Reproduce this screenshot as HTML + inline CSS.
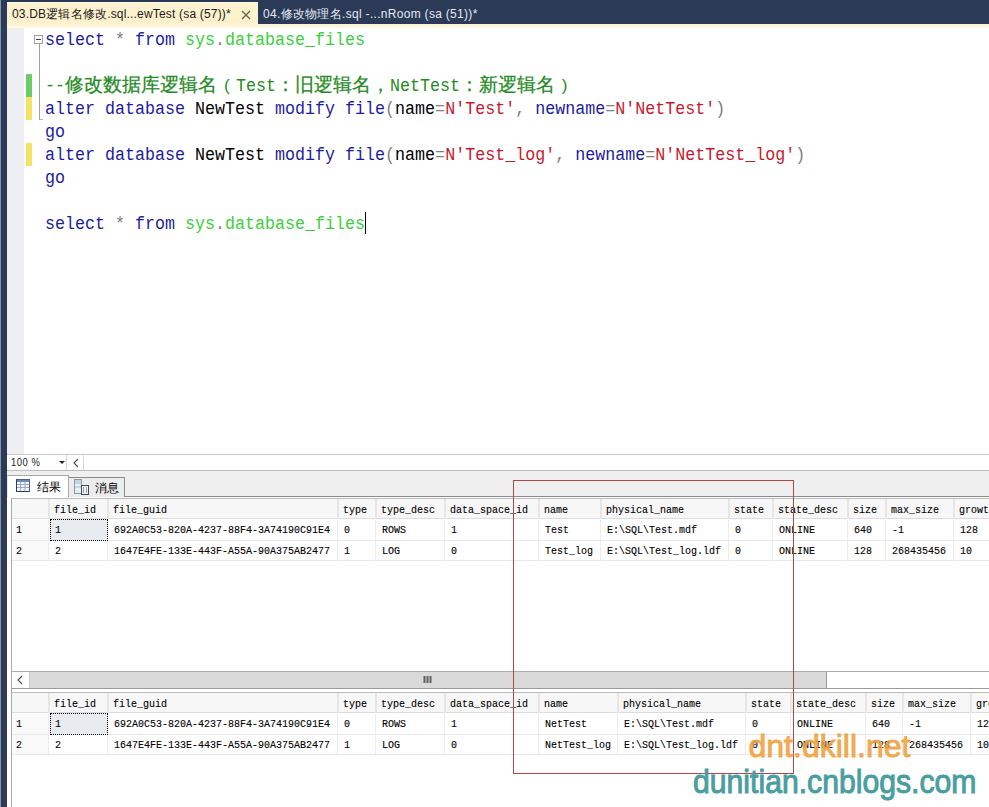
<!DOCTYPE html>
<html><head><meta charset="utf-8">
<style>
*{margin:0;padding:0;box-sizing:border-box}
html,body{width:989px;height:807px;overflow:hidden;background:#fff}
body{position:relative;font-family:"Liberation Sans",sans-serif}
.a{position:absolute}
#lstrip{left:0;top:0;width:7px;height:807px;background:#2a3a57}
#lstrip0{left:0;top:0;width:1px;height:807px;background:#8393a8}
#topbar{left:0;top:0;width:989px;height:24px;background:#2a3a57}
#tab1{left:7px;top:2px;width:251px;height:22px;background:linear-gradient(#fffbea 0,#fdf3d0 2px,#fcf1cc 20px,#fdf3d3 100%)}
#ystrip{left:7px;top:24px;width:982px;height:4px;background:linear-gradient(#fcf2d0,#fdf6de 60%,#fefbf0)}
.tabt{font-size:12px;letter-spacing:0.18px;white-space:nowrap;top:6px;line-height:16px}
#t1{left:12px;color:#1b1b1b}
#t2{left:263px;color:#e4e8f2;letter-spacing:0.3px}
#close{left:241px;top:10px;width:10px;height:10px}
#margin{left:7px;top:28px;width:17px;height:426px;background:#efeff3}
.ln{left:45.4px;font-family:"Liberation Mono",monospace;font-size:18px;line-height:23px;white-space:pre;color:#000;transform:scaleX(0.9259);transform-origin:0 0}
.lnc{left:45.4px;font-family:"Liberation Mono",monospace;font-size:18px;line-height:23px;white-space:pre}
.lnc b{font-weight:normal;font-size:18.76px;line-height:0;-webkit-text-stroke:0.25px #248c24}
.lnc u{text-decoration:none;display:inline-block;width:18.76px;text-align:center;font-family:"Liberation Sans",sans-serif;font-size:17px;line-height:0}
.lnc i{font-style:normal;display:inline-block;transform:scaleX(0.9259);transform-origin:0 0;line-height:0}
.k{color:#1c1c9c}
.g{color:#808080}
.s{color:#c41a2e}
.sy{color:#3ccf3c}
.c{color:#248c24}
#fold{left:34px;top:35px;width:9px;height:9px;border:1px solid #a0a0a0;background:#fff}
#fold i{position:absolute;left:1px;top:3px;width:5px;height:1px;background:#404040}
#foldline{left:39px;top:44px;width:1px;height:76px;background:#a0a0a0}
#foldtick{left:40px;top:119px;width:3px;height:1px;background:#b8b8b8}
#gbar{left:26px;top:74px;width:6px;height:23px;background:#6ccc6c}
#ybar1{left:26px;top:97px;width:6px;height:23px;background:#f4e466}
#ybar2{left:26px;top:143px;width:6px;height:23px;background:#f4e466}
#cursor{left:365px;top:212px;width:1px;height:22px;background:#000}
#zoombar{left:7px;top:454px;width:982px;height:17px;background:#fff;border-top:1px solid #c8c8c8;border-bottom:1px solid #bdbdbd}
#zoomtxt{left:11px;top:455px;font-size:11px;letter-spacing:0.6px;transform:scaleX(0.86);transform-origin:0 0;line-height:15px;color:#1b1b1b}
#zarrow{left:58.5px;top:461px;width:0;height:0;border-left:3px solid transparent;border-right:3px solid transparent;border-top:3px solid #222}
#zsep{left:66px;top:455px;width:18px;height:15px;border-left:1px solid #d8d8d8;border-right:1px solid #d8d8d8}
#zlt{left:73px;top:455px;font-size:12px;line-height:15px;color:#555}
#gband{left:7px;top:471px;width:982px;height:26px;background:#efefef}
#tabline{left:7px;top:496px;width:982px;height:1px;background:#8a8a8a}
#rtab{left:7px;top:475px;width:62px;height:22px;background:#fff;border:1px solid #a8a8a8;border-left-color:#e8e8e8;border-bottom:none}
#mtab{left:68px;top:477px;width:57px;height:20px;background:#ececec;border:1px solid #8a8a8a;border-bottom:none}
.tt{font-size:12px;line-height:14px;color:#000;top:480px}
.gt{position:absolute;font-family:"Liberation Mono",monospace;font-size:11.5px;line-height:14px;color:#000;-webkit-text-stroke:0.12px #000;white-space:pre;transform:scaleX(0.8696);transform-origin:0 0}
.hdr{position:absolute;background:#f7f7f7}
.sepv{position:absolute;width:2px;background:#e6e6e6}
.seph{position:absolute;height:1px;background:#dcdcdc}
.focus{position:absolute;background:#e8ecf1;border:1px dotted #000}
#wm1{left:748.5px;top:730px;font-size:32px;color:rgba(240,160,60,.85);line-height:32px;white-space:nowrap;-webkit-text-stroke:1px rgba(240,160,60,.85)}
#wm2{left:692.5px;top:765.5px;font-size:33px;color:#4a9ea0;line-height:32px;white-space:nowrap;-webkit-text-stroke:1px #4a9ea0;transform:scaleX(0.9144);transform-origin:0 0}
#redbox{left:513px;top:480px;width:281px;height:294px;border:1px solid #b04848}
</style></head><body>
<div id="topbar" class="a"></div>
<div id="lstrip" class="a"></div>
<div id="lstrip0" class="a"></div>
<div id="tab1" class="a"></div>
<div id="ystrip" class="a"></div>
<div id="t1" class="a tabt">03.DB逻辑名修改.sql...ewTest (sa (57))*</div>
<svg id="close" class="a" viewBox="0 0 10 10"><path d="M1 1L9 9M9 1L1 9" stroke="#6b6446" stroke-width="1.4"/></svg>
<div id="t2" class="a tabt">04.修改物理名.sql -...nRoom (sa (51))*</div>
<div id="margin" class="a"></div>
<div id="gbar" class="a"></div>
<div id="ybar1" class="a"></div>
<div id="ybar2" class="a"></div>
<div id="fold" class="a"><i></i></div>
<div id="foldline" class="a"></div>
<div id="foldtick" class="a"></div>
<div class="a ln" style="top:29px"><span class="k">select</span> <span class="g">*</span> <span class="k">from</span> <span class="sy">sys</span><span class="g">.</span><span class="sy">database_files</span></div>
<div class="a lnc" style="top:75px"><span class="c"><i style="width:20px">--</i><b>修改数据库逻辑名</b><u>(</u><i style="width:40px">Test</i><b>：旧逻辑名，</b><i style="width:70px">NetTest</i><b>：新逻辑名</b><u>)</u></span></div>
<div class="a ln" style="top:98px"><span class="k">alter</span> <span class="k">database</span> NewTest <span class="k">modify</span> <span class="k">file</span><span class="g">(</span>name<span class="g">=</span><span class="s">N'Test'</span><span class="g">,</span> <span class="k">newname</span><span class="g">=</span><span class="s">N'NetTest'</span><span class="g">)</span></div>
<div class="a ln" style="top:121px"><span class="k">go</span></div>
<div class="a ln" style="top:144px"><span class="k">alter</span> <span class="k">database</span> NewTest <span class="k">modify</span> <span class="k">file</span><span class="g">(</span>name<span class="g">=</span><span class="s">N'Test_log'</span><span class="g">,</span> <span class="k">newname</span><span class="g">=</span><span class="s">N'NetTest_log'</span><span class="g">)</span></div>
<div class="a ln" style="top:167px"><span class="k">go</span></div>
<div class="a ln" style="top:213px"><span class="k">select</span> <span class="g">*</span> <span class="k">from</span> <span class="sy">sys</span><span class="g">.</span><span class="sy">database_files</span></div>

<div id="cursor" class="a"></div>
<div id="zoombar" class="a"></div>
<div id="zoomtxt" class="a">100 %</div>
<div id="zarrow" class="a"></div>
<div id="zsep" class="a"></div>
<svg class="a" style="left:72px;top:458px" width="8" height="10"><path d="M6 1L2 5L6 9" fill="none" stroke="#555" stroke-width="1.2"/></svg>
<div id="gband" class="a"></div>
<div id="tabline" class="a"></div>
<div id="mtab" class="a"></div>
<div id="rtab" class="a"></div>
<svg class="a" style="left:16px;top:479px" width="14" height="13" viewBox="0 0 14 13">
<rect x="0.5" y="0.5" width="13" height="12" fill="#f4f8fc" stroke="#4a5f88"/>
<rect x="1" y="1" width="12" height="2" fill="#6a8cc0"/>
<path d="M1 5.5H13M1 8.5H13M4.5 3V12M9 3V12" stroke="#9aaac4" stroke-width="1"/>
<path d="M0.5 0.5V12.5H13.5" fill="none" stroke="#303c58"/>
</svg>
<svg class="a" style="left:74px;top:479px" width="15" height="16" viewBox="0 0 15 16">
<rect x="0.5" y="0.5" width="7" height="14" fill="#e6f0f2" stroke="#8a9aa8"/>
<rect x="1" y="1" width="6" height="4" fill="#c4d4dc"/>
<path d="M1 8H7" stroke="#a8b8c0"/>
<rect x="7.5" y="6.5" width="7" height="9" fill="#f0f0f0" stroke="#3c4a68"/>
<path d="M9 9H10M12 9H13M9 11H10M12 11H13M9 13H10M12 13H13" stroke="#505a70"/>
</svg>
<div class="a tt" style="left:37px">结果</div>
<div class="a tt" style="left:95px;top:481px">消息</div>
<div class="a" style="left:11px;top:498px;width:978px;height:1px;background:#bcbcbc"></div>
<div class="a" style="left:11px;top:498px;width:1px;height:309px;background:#a8a8a8"></div>
<div class="hdr" style="left:12px;top:499px;width:977px;height:20px"></div>
<div class="seph" style="left:12px;top:518px;width:977px"></div>
<div class="a" style="left:12px;top:540px;width:977px;height:1px;background:#e8e8e8"></div>
<div class="a" style="left:12px;top:560px;width:977px;height:1px;background:#e8e8e8"></div>
<div class="hdr" style="left:13px;top:520px;width:36px;height:20px;background:#f9f9f9"></div>
<div class="hdr" style="left:13px;top:541px;width:36px;height:19px;background:#f9f9f9"></div>
<div class="sepv" style="left:48px;top:499px;height:20px"></div>
<div class="a" style="left:48px;top:520px;width:1px;height:41px;background:#ececec"></div>
<div class="sepv" style="left:107px;top:499px;height:20px"></div>
<div class="a" style="left:107px;top:520px;width:1px;height:41px;background:#ececec"></div>
<div class="sepv" style="left:337px;top:499px;height:20px"></div>
<div class="a" style="left:337px;top:520px;width:1px;height:41px;background:#ececec"></div>
<div class="sepv" style="left:375px;top:499px;height:20px"></div>
<div class="a" style="left:375px;top:520px;width:1px;height:41px;background:#ececec"></div>
<div class="sepv" style="left:444px;top:499px;height:20px"></div>
<div class="a" style="left:444px;top:520px;width:1px;height:41px;background:#ececec"></div>
<div class="sepv" style="left:538px;top:499px;height:20px"></div>
<div class="a" style="left:538px;top:520px;width:1px;height:41px;background:#ececec"></div>
<div class="sepv" style="left:600px;top:499px;height:20px"></div>
<div class="a" style="left:600px;top:520px;width:1px;height:41px;background:#ececec"></div>
<div class="sepv" style="left:728px;top:499px;height:20px"></div>
<div class="a" style="left:728px;top:520px;width:1px;height:41px;background:#ececec"></div>
<div class="sepv" style="left:772px;top:499px;height:20px"></div>
<div class="a" style="left:772px;top:520px;width:1px;height:41px;background:#ececec"></div>
<div class="sepv" style="left:847px;top:499px;height:20px"></div>
<div class="a" style="left:847px;top:520px;width:1px;height:41px;background:#ececec"></div>
<div class="sepv" style="left:885px;top:499px;height:20px"></div>
<div class="a" style="left:885px;top:520px;width:1px;height:41px;background:#ececec"></div>
<div class="sepv" style="left:953px;top:499px;height:20px"></div>
<div class="a" style="left:953px;top:520px;width:1px;height:41px;background:#ececec"></div>
<div class="focus" style="left:50px;top:519px;width:58px;height:22px"></div>
<div class="gt" style="left:54px;top:503px">file_id</div>
<div class="gt" style="left:113px;top:503px">file_guid</div>
<div class="gt" style="left:343px;top:503px">type</div>
<div class="gt" style="left:381px;top:503px">type_desc</div>
<div class="gt" style="left:450px;top:503px">data_space_id</div>
<div class="gt" style="left:544px;top:503px">name</div>
<div class="gt" style="left:606px;top:503px">physical_name</div>
<div class="gt" style="left:734px;top:503px">state</div>
<div class="gt" style="left:778px;top:503px">state_desc</div>
<div class="gt" style="left:853px;top:503px">size</div>
<div class="gt" style="left:891px;top:503px">max_size</div>
<div class="gt" style="left:959px;top:503px">growth</div>
<div class="gt" style="left:16px;top:523px">1</div>
<div class="gt" style="left:55px;top:523px">1</div>
<div class="gt" style="left:114px;top:523px">692A0C53-820A-4237-88F4-3A74190C91E4</div>
<div class="gt" style="left:344px;top:523px">0</div>
<div class="gt" style="left:382px;top:523px">ROWS</div>
<div class="gt" style="left:451px;top:523px">1</div>
<div class="gt" style="left:545px;top:523px">Test</div>
<div class="gt" style="left:607px;top:523px">E:\SQL\Test.mdf</div>
<div class="gt" style="left:735px;top:523px">0</div>
<div class="gt" style="left:779px;top:523px">ONLINE</div>
<div class="gt" style="left:854px;top:523px">640</div>
<div class="gt" style="left:892px;top:523px">-1</div>
<div class="gt" style="left:960px;top:523px">128</div>
<div class="gt" style="left:16px;top:544px">2</div>
<div class="gt" style="left:55px;top:544px">2</div>
<div class="gt" style="left:114px;top:544px">1647E4FE-133E-443F-A55A-90A375AB2477</div>
<div class="gt" style="left:344px;top:544px">1</div>
<div class="gt" style="left:382px;top:544px">LOG</div>
<div class="gt" style="left:451px;top:544px">0</div>
<div class="gt" style="left:545px;top:544px">Test_log</div>
<div class="gt" style="left:607px;top:544px">E:\SQL\Test_log.ldf</div>
<div class="gt" style="left:735px;top:544px">0</div>
<div class="gt" style="left:779px;top:544px">ONLINE</div>
<div class="gt" style="left:854px;top:544px">128</div>
<div class="gt" style="left:892px;top:544px">268435456</div>
<div class="gt" style="left:960px;top:544px">10</div>
<div class="a" style="left:12px;top:671px;width:977px;height:18px;background:#fff;border-top:1px solid #acacac;border-bottom:1px solid #9a9a9a"></div>
<div class="a" style="left:29px;top:672px;width:798px;height:16px;background:#dadada;border-left:1px solid #c8c8c8;border-right:1px solid #9a9a9a"></div>
<svg class="a" style="left:16px;top:675px" width="8" height="10"><path d="M6 1L2 5L6 9" fill="none" stroke="#555" stroke-width="1.2"/></svg>
<svg class="a" style="left:423px;top:676px" width="10" height="7"><path d="M1.5 0V7M4.5 0V7M7.5 0V7" stroke="#606060" stroke-width="2"/></svg>
<div class="a" style="left:11px;top:692px;width:978px;height:1px;background:#bcbcbc"></div>
<div class="a" style="left:11px;top:692px;width:1px;height:115px;background:#a8a8a8"></div>
<div class="hdr" style="left:12px;top:693px;width:977px;height:20px"></div>
<div class="seph" style="left:12px;top:712px;width:977px"></div>
<div class="a" style="left:12px;top:734px;width:977px;height:1px;background:#e8e8e8"></div>
<div class="a" style="left:12px;top:754px;width:977px;height:1px;background:#e8e8e8"></div>
<div class="hdr" style="left:13px;top:714px;width:36px;height:20px;background:#f9f9f9"></div>
<div class="hdr" style="left:13px;top:735px;width:36px;height:19px;background:#f9f9f9"></div>
<div class="sepv" style="left:48px;top:693px;height:20px"></div>
<div class="a" style="left:48px;top:714px;width:1px;height:41px;background:#ececec"></div>
<div class="sepv" style="left:107px;top:693px;height:20px"></div>
<div class="a" style="left:107px;top:714px;width:1px;height:41px;background:#ececec"></div>
<div class="sepv" style="left:337px;top:693px;height:20px"></div>
<div class="a" style="left:337px;top:714px;width:1px;height:41px;background:#ececec"></div>
<div class="sepv" style="left:375px;top:693px;height:20px"></div>
<div class="a" style="left:375px;top:714px;width:1px;height:41px;background:#ececec"></div>
<div class="sepv" style="left:444px;top:693px;height:20px"></div>
<div class="a" style="left:444px;top:714px;width:1px;height:41px;background:#ececec"></div>
<div class="sepv" style="left:538px;top:693px;height:20px"></div>
<div class="a" style="left:538px;top:714px;width:1px;height:41px;background:#ececec"></div>
<div class="sepv" style="left:617px;top:693px;height:20px"></div>
<div class="a" style="left:617px;top:714px;width:1px;height:41px;background:#ececec"></div>
<div class="sepv" style="left:745px;top:693px;height:20px"></div>
<div class="a" style="left:745px;top:714px;width:1px;height:41px;background:#ececec"></div>
<div class="sepv" style="left:790px;top:693px;height:20px"></div>
<div class="a" style="left:790px;top:714px;width:1px;height:41px;background:#ececec"></div>
<div class="sepv" style="left:865px;top:693px;height:20px"></div>
<div class="a" style="left:865px;top:714px;width:1px;height:41px;background:#ececec"></div>
<div class="sepv" style="left:902px;top:693px;height:20px"></div>
<div class="a" style="left:902px;top:714px;width:1px;height:41px;background:#ececec"></div>
<div class="sepv" style="left:970px;top:693px;height:20px"></div>
<div class="a" style="left:970px;top:714px;width:1px;height:41px;background:#ececec"></div>
<div class="focus" style="left:50px;top:713px;width:58px;height:22px"></div>
<div class="gt" style="left:54px;top:697px">file_id</div>
<div class="gt" style="left:113px;top:697px">file_guid</div>
<div class="gt" style="left:343px;top:697px">type</div>
<div class="gt" style="left:381px;top:697px">type_desc</div>
<div class="gt" style="left:450px;top:697px">data_space_id</div>
<div class="gt" style="left:544px;top:697px">name</div>
<div class="gt" style="left:623px;top:697px">physical_name</div>
<div class="gt" style="left:751px;top:697px">state</div>
<div class="gt" style="left:796px;top:697px">state_desc</div>
<div class="gt" style="left:871px;top:697px">size</div>
<div class="gt" style="left:908px;top:697px">max_size</div>
<div class="gt" style="left:976px;top:697px">growth</div>
<div class="gt" style="left:16px;top:717px">1</div>
<div class="gt" style="left:55px;top:717px">1</div>
<div class="gt" style="left:114px;top:717px">692A0C53-820A-4237-88F4-3A74190C91E4</div>
<div class="gt" style="left:344px;top:717px">0</div>
<div class="gt" style="left:382px;top:717px">ROWS</div>
<div class="gt" style="left:451px;top:717px">1</div>
<div class="gt" style="left:545px;top:717px">NetTest</div>
<div class="gt" style="left:624px;top:717px">E:\SQL\Test.mdf</div>
<div class="gt" style="left:752px;top:717px">0</div>
<div class="gt" style="left:797px;top:717px">ONLINE</div>
<div class="gt" style="left:872px;top:717px">640</div>
<div class="gt" style="left:909px;top:717px">-1</div>
<div class="gt" style="left:977px;top:717px">128</div>
<div class="gt" style="left:16px;top:738px">2</div>
<div class="gt" style="left:55px;top:738px">2</div>
<div class="gt" style="left:114px;top:738px">1647E4FE-133E-443F-A55A-90A375AB2477</div>
<div class="gt" style="left:344px;top:738px">1</div>
<div class="gt" style="left:382px;top:738px">LOG</div>
<div class="gt" style="left:451px;top:738px">0</div>
<div class="gt" style="left:545px;top:738px">NetTest_log</div>
<div class="gt" style="left:624px;top:738px">E:\SQL\Test_log.ldf</div>
<div class="gt" style="left:752px;top:738px">0</div>
<div class="gt" style="left:797px;top:738px">ONLINE</div>
<div class="gt" style="left:872px;top:738px">128</div>
<div class="gt" style="left:909px;top:738px">268435456</div>
<div class="gt" style="left:977px;top:738px">10</div>
<div id="redbox" class="a"></div>
<div id="wm1" class="a">dnt.dkill.net</div>
<div id="wm2" class="a">dunitian.cnblogs.com</div>
</body></html>
